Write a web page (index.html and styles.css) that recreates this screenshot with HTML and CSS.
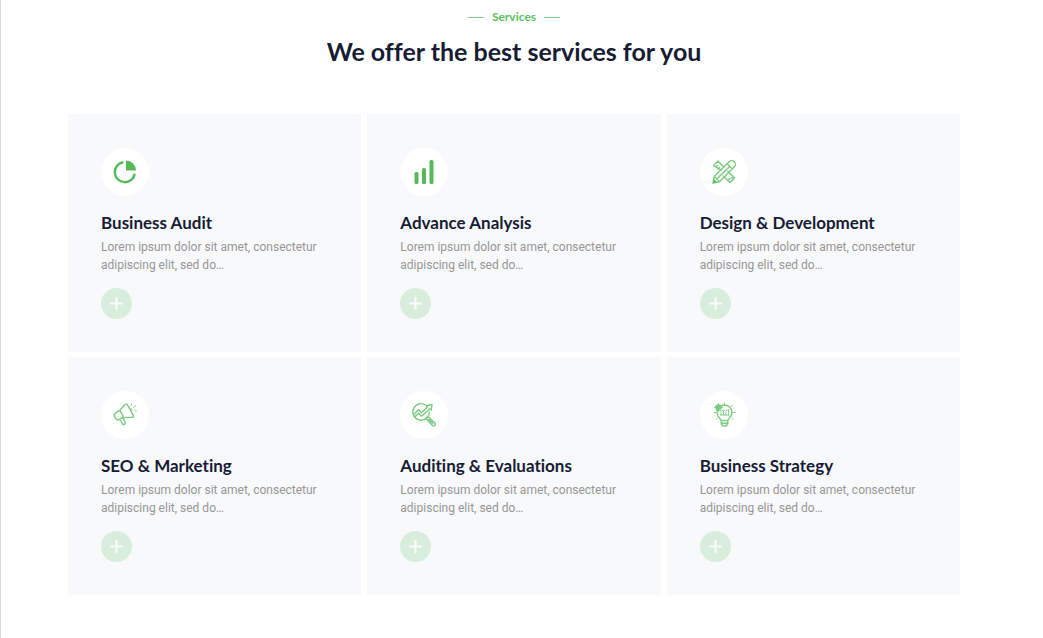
FILE: index.html
```html
<!DOCTYPE html>
<html lang="en">
<head>
<meta charset="utf-8">
<meta name="viewport" content="width=device-width, initial-scale=1">
<title>Services</title>
<link rel="stylesheet" href="styles.css">
</head>
<body>
<main class="services">
  <header class="services-header">
    <p class="eyebrow">Services</p>
    <h1 class="heading">We offer the best services for you</h1>
  </header>
  <div class="grid">
    <article class="card">
      <span class="icon"><svg viewBox="0 0 24 24" aria-hidden="true"><path class="line solid" d="M10.3 2.300A10 10 0 1 0 21.700 13.700"/><path class="fill" d="M13 .5A10 10 0 0 1 23 10.500H13Z"/></svg></span>
      <h2 class="title">Business Audit</h2>
      <p class="text">Lorem ipsum dolor sit amet, consectetur adipiscing elit, sed do…</p>
      <a class="more" href="#" aria-label="More about Business Audit"><svg viewBox="0 0 14 14" aria-hidden="true"><path d="M7 0v14M0 7h14"/></svg></a>
    </article>
    <article class="card">
      <span class="icon"><svg viewBox="0 0 24 24" aria-hidden="true"><rect class="fill" x="2.500" y="12" width="4" height="12" rx="1.500"/><rect class="fill" x="10" y="8" width="4" height="16" rx="1.500"/><rect class="fill" x="17.500" y="0" width="4" height="24" rx="1.500"/></svg></span>
      <h2 class="title">Advance Analysis</h2>
      <p class="text">Lorem ipsum dolor sit amet, consectetur adipiscing elit, sed do…</p>
      <a class="more" href="#" aria-label="More about Advance Analysis"><svg viewBox="0 0 14 14" aria-hidden="true"><path d="M7 0v14M0 7h14"/></svg></a>
    </article>
    <article class="card">
      <span class="icon"><svg viewBox="0 0 24 24" aria-hidden="true"><path class="line" d="M9.200 10.200 1.500 5.500 6 1l5.800 6.200M15.800 11.200l6.700 6.800-4.500 4.500-6.800-6.600M3.500 7l2-1.800M6 9.200l1.600-1.700M16 20.500l1.800-1.800M19.500 18.500l1.500-1.500"/><path class="line" d="M1 23l1.200-6.500L17 1.800a3.600 3.600 0 0 1 5.200 5.200L7.500 21.800ZM2.200 16.500l5.300 5.300M15 3.800l5.200 5.200M4.800 19.100 17.600 6.400"/><path class="fill" d="M1 23l.8-4 3.200 3.200Z"/></svg></span>
      <h2 class="title">Design &amp; Development</h2>
      <p class="text">Lorem ipsum dolor sit amet, consectetur adipiscing elit, sed do…</p>
      <a class="more" href="#" aria-label="More about Design &amp; Development"><svg viewBox="0 0 14 14" aria-hidden="true"><path d="M7 0v14M0 7h14"/></svg></a>
    </article>
    <article class="card">
      <span class="icon"><svg viewBox="0 0 24 24" aria-hidden="true"><path class="line" d="M12.400 1.200c.8-.6 1.600-.3 2 .5l6 11c.5 1-.2 1.800-1.200 1.700l-10 .2-2.800 1.800c-1.500.8-3 .4-3.800-1l-1-1.800c-.8-1.500-.4-3 1-3.800l4.200-2.500ZM6.800 7.300l3.600 6.400M7.200 17l2 3.500c1.300 2 4 .6 2.900-1.500l-2.300-4.300"/><path class="line fine" d="M17 5.500c1.600-.5 2.800 1.500 1.700 2.800M18 2.800l.6-2M20.500 4.500l2.300-2M21.500 7.500l2 .8"/></svg></span>
      <h2 class="title">SEO &amp; Marketing</h2>
      <p class="text">Lorem ipsum dolor sit amet, consectetur adipiscing elit, sed do…</p>
      <a class="more" href="#" aria-label="More about SEO &amp; Marketing"><svg viewBox="0 0 14 14" aria-hidden="true"><path d="M7 0v14M0 7h14"/></svg></a>
    </article>
    <article class="card">
      <span class="icon"><svg viewBox="0 0 24 24" aria-hidden="true"><path class="line" d="M13.800 2A8.300 8.300 0 1 0 15.500 14.300c1.300-1.400 2-3.400 1.800-5.300"/><path class="line" d="M1.500 12 6.500 6.800l3 3 6-5.800-1.200-1.300L20 1.500 19.300 7l-1.500-1.300-8.200 7.500-3-3L3 13.800M14 15.500l2-2 7 6.500c1.200 1.500-.8 3.700-2.500 2.500ZM17 16.500l3.800 3.800"/></svg></span>
      <h2 class="title">Auditing &amp; Evaluations</h2>
      <p class="text">Lorem ipsum dolor sit amet, consectetur adipiscing elit, sed do…</p>
      <a class="more" href="#" aria-label="More about Auditing &amp; Evaluations"><svg viewBox="0 0 14 14" aria-hidden="true"><path d="M7 0v14M0 7h14"/></svg></a>
    </article>
    <article class="card">
      <span class="icon"><svg viewBox="0 0 24 24" aria-hidden="true"><path class="line" d="M9 17.500c0-2-4-3.500-4-8a7.500 7.500 0 0 1 15 0c0 4.500-4 6-4 8ZM9.200 18v3l1.600 2h3.400l1.600-2v-3M9.200 20.300h6.600"/><circle class="fill soft" cx="6.500" cy="4.500" r="3.300"/><path class="line fine" d="M12.500 2V0M19 3.500l1.500-1.500M20.500 9.500H23M19.500 15l1.500 1.500M5.500 15 4 16.500M4.500 9.500H2M2.500 4.500h8M6.500.5v8M9 12V9.500M11.500 12V8M14 12V9.500M16.500 12V7M8.500 8.500l3-1.500 2 1 3-1.500M8.500 12h8.500"/></svg></span>
      <h2 class="title">Business Strategy</h2>
      <p class="text">Lorem ipsum dolor sit amet, consectetur adipiscing elit, sed do…</p>
      <a class="more" href="#" aria-label="More about Business Strategy"><svg viewBox="0 0 14 14" aria-hidden="true"><path d="M7 0v14M0 7h14"/></svg></a>
    </article>
  </div>
</main>
</body>
</html>
```
FILE: styles.css
```css
* { box-sizing: border-box; }
body { margin: 0; background: #fff; font-family: Roboto, "Liberation Sans", sans-serif; }
h1, h2, p { margin: 0; }
.services { min-height: 100vh; padding: 8px 83px 43px 67px; border-left: 1px solid #d9d9d9; }
.services-header { display: flex; flex-direction: column; align-items: center; gap: 7px; margin-bottom: 45px; text-align: center; }
.eyebrow { display: flex; align-items: center; gap: 8px; color: #5bbf60; font: 700 12px/18px Lato, sans-serif; }
.eyebrow::before, .eyebrow::after { content: ""; width: 16px; height: 1px; background: #7fcb83; }
.heading { color: #171c34; font: 700 25px/36px Lato, sans-serif; font-variant-ligatures: none; }
.grid { display: grid; grid-template-columns: repeat(3, 1fr); gap: 5px 6px; }
.card { display: flex; flex-direction: column; align-items: flex-start; padding: 34px 33px 33px; background: #f8f9fb; }
.icon { display: grid; place-items: center; width: 48px; height: 48px; border-radius: 50%; background: #fff; }
.icon svg { width: 24px; height: 24px; overflow: visible; }
.line { fill: none; stroke: #7bcb80; stroke-width: 1.4; stroke-linejoin: round; stroke-linecap: round; }
.solid { stroke: #55b95a; stroke-width: 2.4; stroke-linecap: butt; }
.fine { stroke-width: 0.9; }
.fill { fill: #55b95a; }
.soft { fill: #7bcb80; }
.title { margin-top: 15px; color: #171c34; font: 700 17px/24px Lato, sans-serif; font-variant-ligatures: none; }
.text { margin-top: 3px; color: #979797; font-size: 12px; line-height: 18px; }
.more { display: grid; place-items: center; width: 31px; height: 31px; margin-top: 14px; border-radius: 50%; background: #d8eddb; }
.more svg { width: 13px; height: 13px; fill: none; stroke: #f8fbf9; stroke-width: 2.4; }
@media (max-width: 800px) {
  .services { padding-left: 24px; padding-right: 24px; }
  .grid { grid-template-columns: repeat(auto-fit, minmax(240px, 1fr)); }
}
```
